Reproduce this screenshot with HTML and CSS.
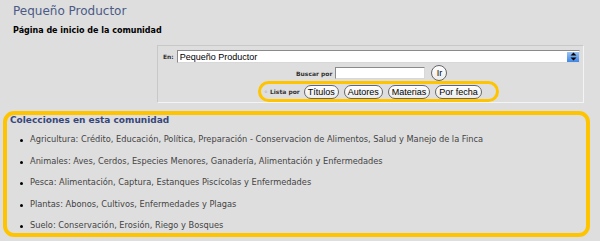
FILE: index.html
```html
<!doctype html>
<html lang="es">
<head>
    <meta charset="UTF-8">
    <title>Pequeño Productor</title>
    <link rel="stylesheet" href="styles.css">
</head>
<body>
<div class="page">
    <h1>Pequeño Productor</h1>
    <h2>Página de inicio de la comunidad</h2>

    <form class="search">
        <div class="row row-in">
            <label class="tiny">En:</label>
            <div class="select">
                <span>Pequeño Productor</span>
                <span class="arrow">
                    <svg width="9" height="9" viewBox="0 0 9 9"><path d="M4.5 0.5 L7.5 3.5 H1.5 Z M4.5 8.5 L7.5 5.5 H1.5 Z" fill="#000"/></svg>
                </span>
            </div>
        </div>
        <div class="row row-buscar">
            <label class="tiny">Buscar por</label>
            <input type="text" class="query">
            <button type="button" class="pill ir">Ir</button>
        </div>
        <div class="row row-lista">
            <div class="lista">
                <span class="tiny"><span class="dot">&#9702;</span> Lista por</span>
                <button type="button" class="pill">Títulos</button>
                <button type="button" class="pill">Autores</button>
                <button type="button" class="pill">Materias</button>
                <button type="button" class="pill">Por fecha</button>
            </div>
        </div>
    </form>

    <div class="collections">
        <h3>Colecciones en esta comunidad</h3>
        <ul>
            <li>Agricultura: Crédito, Educación, Política, Preparación - Conservacion de Alimentos, Salud y Manejo de la Finca</li>
            <li>Animales: Aves, Cerdos, Especies Menores, Ganadería, Alimentación y Enfermedades</li>
            <li>Pesca: Alimentación, Captura, Estanques Piscícolas y Enfermedades</li>
            <li>Plantas: Abonos, Cultivos, Enfermedades y Plagas</li>
            <li>Suelo: Conservación, Erosión, Riego y Bosques</li>
        </ul>
    </div>
</div>
</body>
</html>
```

FILE: styles.css
```css
html, body {
    margin: 0;
    background: #dedede;
}
.page {
    padding: 3px 10px 0 3px;
    font-family: "DejaVu Sans", Verdana, sans-serif;
    color: #444;
}
h1 {
    margin: 0 0 0 10px;
    font-size: 12px;
    font-weight: normal;
    color: #4b5a86;
    line-height: 16px;
}
h2 {
    margin: 7px 0 0 10px;
    font-size: 8px;
    color: #000;
    line-height: 10px;
}
.search {
    margin: 9px 6px 0 154px;
    height: 56px;
    border: 1px solid #c8c8c8;
    border-right-color: #f4f4f4;
    border-bottom-color: #f4f4f4;
    display: flex;
    flex-direction: column;
}
.row {
    display: flex;
    align-items: center;
}
.tiny {
    font-size: 6px;
    font-weight: bold;
    color: #333;
}
.row-in {
    margin: 4px 3px 0 5px;
    gap: 3px;
}
.select {
    flex: 1;
    height: 11px;
    background: #fff;
    border: 1px solid #8a8a8a;
    border-right-color: #d8d8d8;
    border-bottom-color: #d8d8d8;
    font: 9px "Liberation Sans", Arial, sans-serif;
    color: #000;
    display: flex;
    align-items: center;
    justify-content: space-between;
    padding-left: 2px;
}
.arrow {
    width: 12px;
    height: 10px;
    background: linear-gradient(#9cc4f4, #3f86e6);
    display: flex;
    align-items: center;
    justify-content: center;
}
.row-buscar {
    margin: 2px 0 0 138px;
    gap: 3px;
}
.query {
    width: 88px;
    height: 10px;
    margin: 0;
    padding: 0;
    border: 1px solid #8a8a8a;
    border-right-color: #d8d8d8;
    border-bottom-color: #d8d8d8;
    background: #fff;
}
.pill {
    height: 14px;
    padding: 0 3px;
    margin: 0;
    border: 1px solid #666;
    border-radius: 8px;
    background: linear-gradient(#fff, #ececec);
    font: 9px "Liberation Sans", Arial, sans-serif;
    color: #000;
    line-height: 12px;
}
.ir {
    width: 16px;
    height: 16px;
    padding: 0;
    margin-left: 3px;
}
.row-lista {
    margin: 0 0 0 100px;
}
.lista {
    border: 3px solid #ffc400;
    border-radius: 11px;
    height: 15px;
    padding: 0 14px 0 3px;
    display: flex;
    align-items: center;
    gap: 5px;
}
.lista .tiny {
    margin-right: -1px;
}
.dot {
    color: #888;
}
.collections {
    margin-top: 8px;
    border: 4px solid #ffc400;
    border-radius: 11px;
    height: 118px;
    padding: 0 0 0 3px;
}
h3 {
    margin: 0;
    font-size: 9px;
    color: #37467a;
    line-height: 11px;
}
ul {
    margin: 8px 0 0;
    padding: 0 0 0 20px;
    list-style: none;
    font-size: 8.25px;
}
li {
    line-height: 10px;
    margin-bottom: 11.5px;
    position: relative;
}
li::before {
    content: "";
    position: absolute;
    left: -10px;
    top: 5px;
    width: 3px;
    height: 3px;
    border-radius: 50%;
    background: #000;
}
```
